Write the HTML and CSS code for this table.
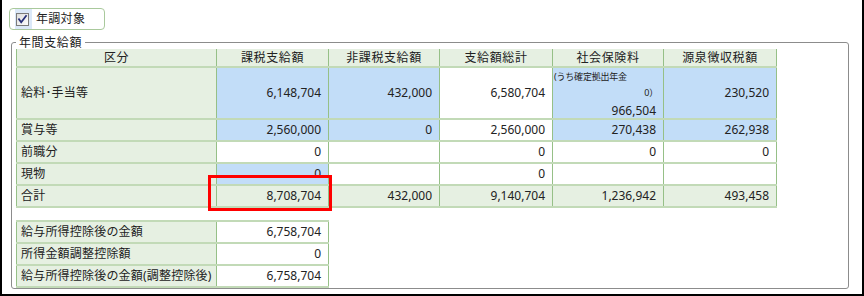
FILE: index.html
```html
<!DOCTYPE html>
<html lang="ja">
<head>
<meta charset="utf-8">
<title>年間支給額</title>
<link rel="stylesheet" href="styles.css">
</head>
<body>
<div class="frame">
  <div class="chk-group">
    <span class="cb-box">
      <svg class="cb" width="13" height="13" viewBox="0 0 13 13">
        <defs>
          <linearGradient id="cbg" x1="0" y1="0" x2="1" y2="1">
            <stop offset="0" stop-color="#dcdcdc"/>
            <stop offset="1" stop-color="#ffffff"/>
          </linearGradient>
        </defs>
        <rect x="0.5" y="0.5" width="12" height="12" fill="url(#cbg)" stroke="#7b7b7b"/>
        <path d="M3 6.2 L5.2 9.2 L10 3" fill="none" stroke="#27307a" stroke-width="1.8" stroke-linecap="square"/>
      </svg>
    </span>
    <span class="chk-label">年調対象</span>
  </div>

  <fieldset class="panel">
    <legend class="panel-title">年間支給額</legend>
    <div class="table-wrap">
      <table class="grid main">
        <colgroup>
          <col class="c-label"><col class="c-num"><col class="c-num2"><col class="c-num3"><col class="c-num2"><col class="c-num3">
        </colgroup>
        <thead>
          <tr class="head">
            <th>区分</th><th>課税支給額</th><th>非課税支給額</th><th>支給額総計</th><th>社会保険料</th><th>源泉徴収税額</th>
          </tr>
        </thead>
        <tbody>
          <tr class="tall">
            <td class="lbl">給料･手当等</td>
            <td class="num blue">6,148,704</td>
            <td class="num blue">432,000</td>
            <td class="num">6,580,704</td>
            <td class="num blue social">
              <div class="social-in">
                <span class="note">(うち確定拠出年金</span>
                <span class="note note-r">0）</span>
                <span class="social-val">966,504</span>
              </div>
            </td>
            <td class="num blue">230,520</td>
          </tr>
          <tr>
            <td class="lbl">賞与等</td>
            <td class="num blue">2,560,000</td>
            <td class="num blue">0</td>
            <td class="num">2,560,000</td>
            <td class="num blue">270,438</td>
            <td class="num blue">262,938</td>
          </tr>
          <tr>
            <td class="lbl">前職分</td>
            <td class="num">0</td>
            <td class="num"></td>
            <td class="num">0</td>
            <td class="num">0</td>
            <td class="num">0</td>
          </tr>
          <tr>
            <td class="lbl">現物</td>
            <td class="num blue">0</td>
            <td class="num"></td>
            <td class="num">0</td>
            <td class="num"></td>
            <td class="num"></td>
          </tr>
          <tr class="total">
            <td class="lbl">合計</td>
            <td class="num">8,708,704</td>
            <td class="num">432,000</td>
            <td class="num">9,140,704</td>
            <td class="num">1,236,942</td>
            <td class="num">493,458</td>
          </tr>
        </tbody>
      </table>
      <div class="highlight"></div>
    </div>

    <table class="grid sub">
      <colgroup><col class="c-label"><col class="c-num"></colgroup>
      <tbody>
        <tr><td class="lbl">給与所得控除後の金額</td><td class="num">6,758,704</td></tr>
        <tr><td class="lbl">所得金額調整控除額</td><td class="num">0</td></tr>
        <tr><td class="lbl">給与所得控除後の金額(調整控除後)</td><td class="num">6,758,704</td></tr>
      </tbody>
    </table>
  </fieldset>
</div>
</body>
</html>
```

FILE: styles.css
```css
* { box-sizing: border-box; }

html, body {
  margin: 0;
  background: #fff;
}

body {
  font-family: "Noto Sans", "Noto Sans CJK JP", sans-serif;
  font-size: 12px;
  color: #222;
}

.frame {
  width: 864px;
  height: 296px;
  border: 2px solid #000;
  border-top: 0;
  padding: 8px 0 0 7px;
}

/* checkbox group */
.chk-group {
  display: flex;
  align-items: center;
  width: 96px;
  height: 22px;
  border: 1px solid #a9c99c;
  border-radius: 4px;
  padding-left: 5px;
}

.cb-box {
  display: flex;
  align-items: center;
  width: 17px;
  height: 20px;
  padding-left: 1px;
  background: #dbe8f8;
}

.cb { display: block; }

.chk-label {
  margin-left: 4px;
  line-height: 14px;
  letter-spacing: 0.3px;
}

/* panel */
.panel {
  margin: 6px 0 0 2px;
  width: 838px;
  padding: 0 0 0 4px;
  border: 1px solid #8c8c8c;
  border-radius: 3px;
  min-width: 0;
}

.panel-title {
  padding: 0 3px;
  line-height: 13px;
  letter-spacing: 0.6px;
}

.table-wrap {
  position: relative;
  width: 760px;
}

.grid {
  border-collapse: collapse;
  table-layout: fixed;
}

.main { width: 760px; }
.sub { width: 312px; margin-top: 12px; }

.c-label { width: 200px; }
.c-num { width: 112px; }
.c-num2 { width: 111px; }
.c-num3 { width: 113px; }

.grid th,
.grid td {
  border-left: 1px solid #96c087;
  border-right: 1px solid #96c087;
  border-top: 2px solid #c2dab7;
  border-bottom: 2px solid #c2dab7;
  padding: 0;
  white-space: nowrap;
  overflow: hidden;
}

.grid th {
  background: #e6f0e2;
  font-weight: normal;
  height: 18px;
  line-height: 14px;
  text-align: center;
  letter-spacing: 0.6px;
  border-top: 0;
}

.grid td { height: 22px; line-height: 14px; }

.main tr.tall td { height: 50px; }

.lbl {
  background: #e6f0e2;
  padding-left: 4px !important;
  letter-spacing: 0.2px;
}

.num {
  text-align: right;
  padding-right: 7px !important;
  background: #fff;
}

.num.blue { background: #c2ddf8; }

.total td { background: #e6f0e2; }

/* social insurance cell */
.social { vertical-align: top; }

.social-in {
  display: flex;
  flex-direction: column;
  padding-top: 3px;
}

.note {
  font-size: 9px;
  line-height: 11px;
  text-align: left;
  padding-left: 1px;
  letter-spacing: -0.2px;
}

.note-r {
  text-align: right;
  margin: 5px -2px 0 0;
}

.social-val {
  margin-top: 6px;
  line-height: 14px;
}

/* annotation overlay */
.highlight {
  position: absolute;
  left: 192px;
  top: 126px;
  width: 124px;
  height: 36px;
  border: 3px solid #f00;
}
```
